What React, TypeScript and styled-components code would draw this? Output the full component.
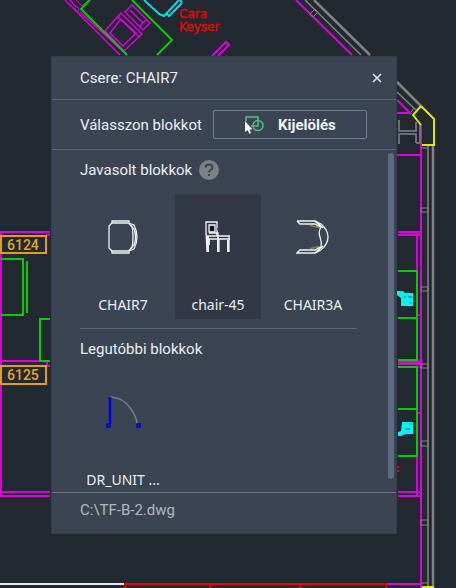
import React from "react";
import styled, { createGlobalStyle } from "styled-components";

const GlobalStyle = createGlobalStyle`
  *, *::before, *::after { box-sizing: border-box; }
  body { margin: 0; background: #222930; }
`;

const Page = styled.div`
  position: relative;
  min-height: 100vh;
  display: flex;
  align-items: flex-start;
  padding: 56px 59px 52px 51px;
  overflow: hidden;
  font-family: Roboto, "Noto Sans", sans-serif;
`;

const Canvas = styled.svg`
  position: absolute;
  inset: 0;
  width: 100%;
  height: 100%;
  fill: none;
  stroke-width: 2;
`;

const RoomText = styled.text`
  font: 500 14px Roboto, sans-serif;
  fill: #e3a81c;
`;

const NameText = styled.text`
  font: 12px "DejaVu Sans", sans-serif;
  fill: #f00000;
  stroke: #f00000;
  stroke-width: 0.4;
`;

const Dialog = styled.section`
  position: relative;
  flex: 1;
  min-width: 0;
  display: flex;
  flex-direction: column;
  background: #3b4453;
  border: 1px solid #353d4a;
  color: #eceef1;
  font-size: 15px;
  line-height: 24px;
`;

const Header = styled.header`
  display: flex;
  align-items: center;
  justify-content: space-between;
  height: 43px;
  padding: 0 12px 0 28px;
  border-bottom: 1px solid #56657a;
`;

const Title = styled.h1`
  margin: 0;
  font-size: 15px;
  font-weight: 400;
`;

const CloseButton = styled.button`
  display: flex;
  padding: 2px;
  border: 0;
  background: none;
  color: #dfe2e6;
  cursor: pointer;
`;

const Toolbar = styled.div`
  display: flex;
  align-items: center;
  gap: 11px;
  height: 50px;
  padding: 0 29px 0 28px;
  border-bottom: 1px solid #56657a;
  white-space: nowrap;
`;

const SelectButton = styled.button`
  flex: 1;
  display: flex;
  align-items: center;
  justify-content: center;
  gap: 13px;
  height: 29px;
  padding: 0;
  border: 1px solid #6d7f95;
  border-radius: 2px;
  background: none;
  color: #f3f4f6;
  font: 700 15px Roboto, sans-serif;
  cursor: pointer;
`;

const Body = styled.div`
  display: flex;
  height: 342px;
  padding-right: 2px;
  overflow: hidden;
`;

const Lists = styled.div`
  flex: 1;
  min-width: 0;
  padding-left: 28px;
`;

const Thumb = styled.div`
  width: 6px;
  height: 326px;
  margin-top: 3px;
  border-radius: 3px;
  background: #5c6b80;
`;

const Section = styled.section`
  padding-top: 8px;
  margin-right: 31px;

  & + & { border-top: 1px solid #56657a; }
`;

const SectionHead = styled.div`
  display: flex;
  align-items: center;
  gap: 7px;
`;

const SectionTitle = styled.h2`
  margin: 0;
  font-size: 15px;
  font-weight: 400;
`;

const HelpButton = styled.button`
  display: flex;
  align-items: center;
  justify-content: center;
  width: 20px;
  height: 20px;
  padding: 0;
  border: 0;
  border-radius: 50%;
  background: #7f8083;
  cursor: pointer;
`;

const Tiles = styled.div<{ $tight?: boolean }>`
  display: flex;
  gap: 9px;
  padding: ${(p) => (p.$tight ? "8px" : "12px")} 0 9px;
`;

const Tile = styled.button<{ $selected?: boolean }>`
  flex: none;
  display: flex;
  flex-direction: column;
  align-items: center;
  justify-content: space-between;
  width: 86px;
  height: 125px;
  padding: 26px 0 2px;
  border: 0;
  background: ${(p) => (p.$selected ? "#323845" : "transparent")};
  color: #eceef1;
  font: 14px/24px "Noto Sans", sans-serif;
  white-space: nowrap;
  cursor: pointer;
`;

const Footer = styled.footer`
  height: 41px;
  padding: 5px 28px;
  border-top: 1px solid #66758a;
  color: #b3b7bd;
`;

const Drawing = styled.svg`
  display: block;
  fill: none;
  stroke: #f2f2f2;
  stroke-width: 1.3;
`;

const M = "#dc00dc";
const G = "#00d000";
const GRAY = "#828282";
const Y = "#e6e600";

function FloorPlan() {
  return (
    <Canvas viewBox="0 0 456 588" preserveAspectRatio="xMinYMin slice" aria-label="Alaprajz">
      <g stroke={M}>
        <path d="M65 0 120 55M70 0 76 7M80 12 127 55" strokeWidth="1.5" />
        <circle cx="77" cy="9" r="2" strokeWidth="1" />
        <path d="M76 0 82 6 89 0" strokeWidth="1" />
        <path d="M121 13 105 31 124 51 142 34ZM121 19 110 33 123 46 136 33ZM118 17 139 37M132 5 150 23 143 30 125 12ZM130 10 143 23M146 20 140 26" strokeWidth="1.5" />
        <path d="M212 56 226 42 229 45 218 56" />
        <path d="M296 0 352 55M397 100 410 113H397" />
        <path d="M397 155H421M421 125V588M398 232H421M398 235H421M417 233V272M417 456V496M418 315H421M418 413H421M398 492H421M398 496H421M386 584H421" />
        <path d="M398 363H421" strokeWidth="4" />
        <path d="M417 360h5v7h-5z" strokeWidth="1" />
        <path d="M0 232H50M46 235H50M1 232V496M0 361H50M47 361V366H50M0 492H50M0 496H50" />
      </g>
      <g stroke={G}>
        <path d="M90 0 81 9 127 55M132 0 172 40 157 55" />
        <path d="M1 259H23V315H1M27 261V313M50 319H40V361H50" />
        <path d="M398 271H417V360H398M398 318H417M398 367H417V456H398M398 409H417" />
      </g>
      <path d="M144 0 159 14 164 16 179 0M182 3 169 16 166 13M182 3 180 0" stroke="#00dede" />
      <g stroke={GRAY}>
        <path d="M314 0 370 55M397 82 421 106M433 146V588" strokeWidth="2.5" />
        <path d="M305 0 361 55M397 92 416 110M428 146V586" strokeWidth="1.5" />
        <path d="M310 14 315 9 318 12 313 17ZM411 112 414 108 417 111" strokeWidth="1" />
        <path d="M399 121V131H416V122M399 143V134H416V143M398 121H400M398 143H400M416 143H420V124" strokeWidth="1.5" />
        <path d="M421 148h7M421 208h7v4h-7zM421 287h7v4h-7zM421 364h7v4h-7zM421 441h7v5h-7zM421 520h7v5h-7zM421 583h7" strokeWidth="1" />
      </g>
      <path d="M421 106 434 119V145H422M421 106 413 115 421 125M422 587H434" stroke={Y} />
      <g fill="#00f4f4">
        <path d="M397 291H403L405 293H413V306H401V298L397 295Z" />
        <path d="M402 422H413V434H405L401 436H398V432L401 431Z" />
      </g>
      <path d="M408 297h4M404 297h2M410 303h2M410 424h2M405 429h5" stroke="#146c72" strokeWidth="1" />
      <path d="M398 466V468M398 470V472" stroke="#e00000" />
      <path d="M0 584H124" stroke="#e8e8e8" />
      <path d="M125 588V584H386V588M210 584V588M300 584V588" stroke="#ee0000" />
      <path d="M1 236H46V253H1ZM1 366H46V384H1Z" stroke="#e3a00c" />
      <RoomText x="7" y="250">6124</RoomText>
      <RoomText x="7" y="380">6125</RoomText>
      <NameText x="179" y="18">Cara</NameText>
      <NameText x="179" y="31">Keyser</NameText>
    </Canvas>
  );
}

function SelectIcon() {
  return (
    <svg width="21" height="20" viewBox="0 0 21 20" fill="none" aria-hidden="true">
      <path d="M2 6V2H14V11H7" stroke="#55bd7e" strokeWidth="1.5" />
      <circle cx="14" cy="10.5" r="5" stroke="#55bd7e" strokeWidth="1.5" />
      <path d="M1 6V17L3.5 15 5.5 19 7 18 5.5 14.5H8.5Z" fill="#fff" />
    </svg>
  );
}

function Chair7() {
  return (
    <Drawing width="34" height="34" viewBox="0 0 34 34" aria-hidden="true">
      <path d="M6 3H22L26 6Q28 17 26 28L22 31H6L3 28V6Z" />
      <path d="M6 3V1H23V3M6 31V33H23V31" />
      <path d="M23 3 28 5Q34 17 28 29L23 31M24 5 28 9Q31 17 28 25L24 29" />
    </Drawing>
  );
}

function Chair45() {
  return (
    <Drawing width="34" height="34" viewBox="0 0 34 34" aria-hidden="true">
      <path d="M5 15V2H16V16M5 10 6 32M8 5H14V12H8Z" />
      <path d="M10 7H12V10H10Z" stroke="#0b0c10" />
      <path d="M6 16H29M6 19H29M8 13H17V17M28 16V32M18 19V32" />
      <path d="M7 16V32M17 17V32M27 20V32" strokeWidth="2" />
      <path d="M8 19V25" strokeWidth="2" />
      <path d="M17 8V10" stroke="#2525ff" />
    </Drawing>
  );
}

function Chair3A() {
  return (
    <Drawing width="34" height="34" viewBox="0 0 34 34" aria-hidden="true">
      <path d="M14 5.5 23 7.5M14 28.5 23 26.5" stroke="#8d814c" />
      <path d="M1 1H19L25 4Q32 10 32 17T25 30L19 33H1L4 30H19L24 27M1 1 4 4H19L24 7" />
      <path d="M19 1 25 7Q22 12 24 17T25 27L19 33M22 3 27 8M22 31 27 26" />
    </Drawing>
  );
}

function DoorUnit() {
  return (
    <Drawing width="36" height="34" viewBox="0 0 36 34" aria-hidden="true">
      <path d="M5 2Q18 2 26 14Q32 23 32 29" stroke="#777b80" strokeWidth="1.5" />
      <path d="M5 2V29" stroke="#0000f4" strokeWidth="2.5" />
      <path d="M2 29H5V32H2ZM32 29H35V32H32Z" stroke="#0000d8" strokeWidth="1.5" />
    </Drawing>
  );
}

const suggested = [
  { name: "CHAIR7", icon: <Chair7 /> },
  { name: "chair-45", icon: <Chair45 /> },
  { name: "CHAIR3A", icon: <Chair3A /> },
];

export default function App() {
  const [selected, setSelected] = React.useState("chair-45");
  return (
    <>
      <GlobalStyle />
      <Page>
        <FloorPlan />
        <Dialog role="dialog" aria-labelledby="dialog-title">
          <Header>
            <Title id="dialog-title">Csere: CHAIR7</Title>
            <CloseButton aria-label="Bezárás">
              <svg width="10" height="10" viewBox="0 0 10 10" stroke="currentColor" strokeWidth="1.6">
                <path d="M1 1 9 9M9 1 1 9" />
              </svg>
            </CloseButton>
          </Header>
          <Toolbar>
            <span>Válasszon blokkot</span>
            <SelectButton>
              <SelectIcon />
              Kijelölés
            </SelectButton>
          </Toolbar>
          <Body>
            <Lists>
              <Section>
                <SectionHead>
                  <SectionTitle>Javasolt blokkok</SectionTitle>
                  <HelpButton aria-label="Súgó">
                    <svg width="12" height="14" viewBox="0 0 12 14" fill="none">
                      <path d="M2.5 4.5Q2.5 1.5 6 1.5T9.5 4.5Q9.5 6 7.5 7Q6 8 6 9.5" stroke="#3b4453" strokeWidth="2" />
                      <path d="M5 11H7V13H5Z" fill="#3b4453" />
                    </svg>
                  </HelpButton>
                </SectionHead>
                <Tiles>
                  {suggested.map((b) => (
                    <Tile
                      key={b.name}
                      $selected={selected === b.name}
                      aria-pressed={selected === b.name}
                      onClick={() => setSelected(b.name)}
                    >
                      {b.icon}
                      {b.name}
                    </Tile>
                  ))}
                </Tiles>
              </Section>
              <Section>
                <SectionHead>
                  <SectionTitle>Legutóbbi blokkok</SectionTitle>
                </SectionHead>
                <Tiles $tight>
                  <Tile>
                    <DoorUnit />
                    DR_UNIT ...
                  </Tile>
                </Tiles>
              </Section>
            </Lists>
            <Thumb />
          </Body>
          <Footer>C:\TF-B-2.dwg</Footer>
        </Dialog>
      </Page>
    </>
  );
}
